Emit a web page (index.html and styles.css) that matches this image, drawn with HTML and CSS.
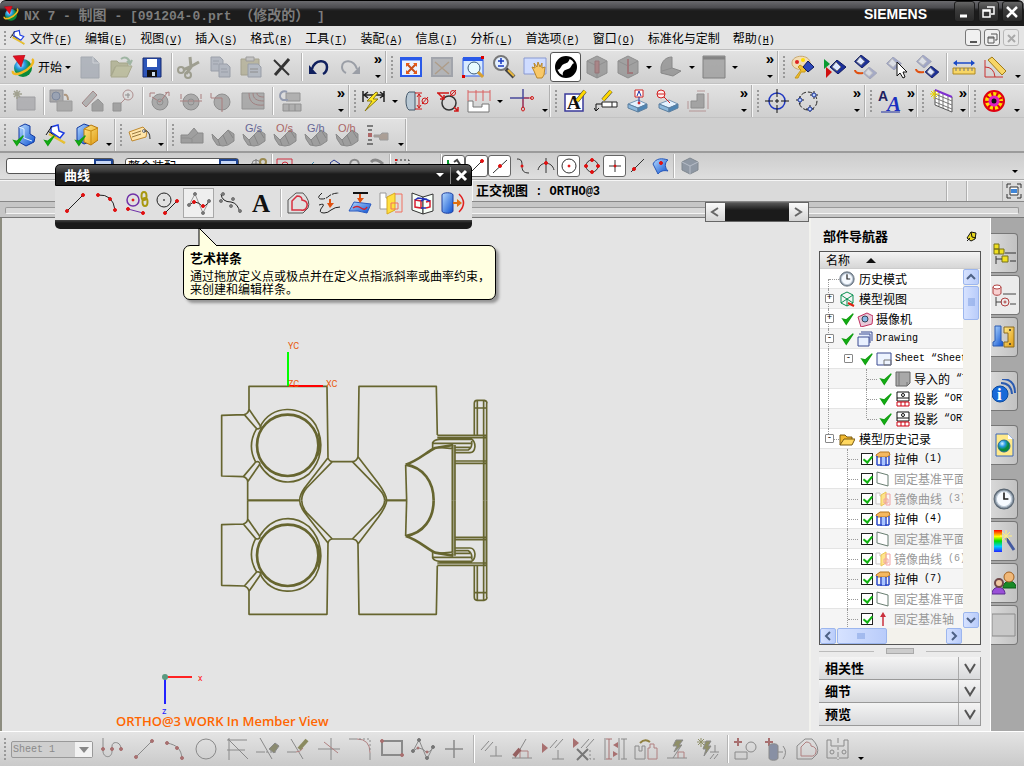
FILE: index.html
```
<!DOCTYPE html>
<html lang="zh-CN">
<head>
  <meta charset="UTF-8">
  <meta name="viewport" content="width=device-width, initial-scale=1">
  <title>NX 7 - 制图</title>
  <link rel="stylesheet" href="styles.css">
</head>
<body>
<svg class="defs" width="0" height="0">
  <defs>
    <linearGradient id="blue" x1="0" y1="0" x2="1" y2="1"><stop offset="0" stop-color="#b8dcff"/><stop offset="1" stop-color="#0a4fd0"/></linearGradient>
    <linearGradient id="gold" x1="0" y1="0" x2="1" y2="1"><stop offset="0" stop-color="#ffe98a"/><stop offset="1" stop-color="#e09a10"/></linearGradient>
    <radialGradient id="globe" cx=".35" cy=".3"><stop offset="0" stop-color="#d8f4ff"/><stop offset=".5" stop-color="#2a9be8"/><stop offset="1" stop-color="#0a8a3a"/></radialGradient>
    <linearGradient id="rainbow" x1="0" y1="0" x2="0" y2="1"><stop offset="0" stop-color="#f00"/><stop offset=".3" stop-color="#ff0"/><stop offset=".5" stop-color="#0d0"/><stop offset=".75" stop-color="#0cf"/><stop offset="1" stop-color="#22f"/></linearGradient>
  </defs>
  <symbol id="tick" viewBox="0 0 16 16"><path d="M2 8l4 6L14 2 6 9z" fill="#12b012" stroke="#12a012" stroke-width="1.5"/></symbol>
  <symbol id="nx" viewBox="0 0 24 24"><circle cx="12" cy="13" r="9" fill="url(#globe)" stroke="none"/><path d="M21 4c4 3-3 11-11 14-5 2-9 1-8-2" fill="none" stroke="#f0b820" stroke-width="2.5"/><path d="M2 1l12-1-4 12z" fill="#e01020" stroke="#a00010" stroke-width=".5"/></symbol>
  <symbol id="sketch" viewBox="0 0 24 24"><path d="M8 4l7-2 1 6 5 2-4 5-9-6z" fill="#fff" stroke="#1a3ae0" stroke-width="1.5"/><path d="M3 12l6-9M5 8l16 12" stroke="#111" fill="none"/><path d="M6 11l16 9" stroke="#e8c030" stroke-width="2.5"/></symbol>
  <symbol id="block" viewBox="0 0 24 24"><path d="M3 15l10-4 9 4-9 4z" fill="#e4f2ff" stroke="#7796b4"/><path d="M3 15v4l10 4v-4z" fill="#8cb8dc" stroke="#5d7f9f"/><path d="M22 15v4l-9 4v-4z" fill="#4d85b5" stroke="#5d7f9f"/></symbol>
  <symbol id="surf" viewBox="0 0 24 24"><path d="M1 11l6 6 5-5 5-5 6 4v7l-6 4-5 1-6-1-4-6z" fill="#8c8c8c" stroke="#707070"/><path d="M7 17l2 5M12 12l4 9M17 7l5 8" stroke="#6c6c6c" fill="none"/></symbol>
  <symbol id="dia" viewBox="0 0 16 14"><path d="M7 0l9 7-8 7L0 7z" fill="#1b2f9a" stroke="#101c60"/><path d="M6 2l5 5-4 4-5-4z" fill="#dfe8ff"/></symbol>
  <symbol id="extrude" viewBox="0 0 16 16"><path d="M1 4l4-3h9l1 3-3 2H2z" fill="#f4b860" stroke="#b87820"/><path d="M2 5v9M6 6v9M11 6v9M14 5v9M2 14h12" stroke="#2a4ac8" stroke-width="1.5" fill="none"/><path d="M7 6h3v8H7z" fill="#a8c4ff"/></symbol>
  <symbol id="plane" viewBox="0 0 16 16"><path d="M2 1l11 3v11L2 12z" fill="#fff" stroke="#456050"/></symbol>
  <symbol id="mirror" viewBox="0 0 16 16"><path d="M1 2h4v3h3v8H1z" fill="#fff" stroke="#bbb"/><path d="M6 4l5-3v11l-5 3z" fill="#ffe070" stroke="#e8b830"/><path d="M11 3h4v11h-4zM9 8h4v4H9z" fill="none" stroke="#f09090"/></symbol>
  <symbol id="ortho" viewBox="0 0 16 16"><path d="M2 1h12v9H2z" fill="#fff" stroke="#111"/><circle cx="8" cy="4" r="1.5" fill="none" stroke="#111"/><path d="M2 7h12" stroke="#111"/><path d="M2 11h12v4H2zM6 11v4M10 11v4" fill="#fff" stroke="#d00010"/></symbol>
  <symbol id="clock" viewBox="0 0 20 20"><circle cx="10" cy="10" r="9" fill="#8a97a5" stroke="#5a6672"/><circle cx="10" cy="10" r="7" fill="#f6faff" stroke="#c0ccd8"/><path d="M10 4v6h4" fill="none" stroke="#222" stroke-width="1.5"/></symbol>
</svg>

<div class="app">
  <header class="titlebar">
    <svg class="app-icon"><use href="#nx"/></svg>
    <h1><span class="la">NX 7 - </span>制图<span class="la"> - [091204-0.prt </span>（修改的）<span class="la"> ]</span></h1>
    <span class="brand">SIEMENS</span>
    <div class="win-buttons">
      <button aria-label="最小化"><svg><path d="M5 13h7" stroke-width="3"/></svg></button>
      <button aria-label="还原"><svg><path d="M8 4h7v7h-3M4 7h7v7H4zM4 8h7" stroke-width="1.5"/></svg></button>
      <button aria-label="关闭"><svg><path d="M4 4l10 10M14 4L4 14" stroke-width="2.5"/></svg></button>
    </div>
  </header>

  <nav class="menubar">
    <i class="grip"></i>
    <svg class="menu-icon"><use href="#sketch"/></svg>
    <button>文件<span class="la">(<u>F</u>)</span></button>
    <button>编辑<span class="la">(<u>E</u>)</span></button>
    <button>视图<span class="la">(<u>V</u>)</span></button>
    <button>插入<span class="la">(<u>S</u>)</span></button>
    <button>格式<span class="la">(<u>R</u>)</span></button>
    <button>工具<span class="la">(<u>T</u>)</span></button>
    <button>装配<span class="la">(<u>A</u>)</span></button>
    <button>信息<span class="la">(<u>I</u>)</span></button>
    <button>分析<span class="la">(<u>L</u>)</span></button>
    <button>首选项<span class="la">(<u>P</u>)</span></button>
    <button>窗口<span class="la">(<u>O</u>)</span></button>
    <button>标准化与定制</button>
    <button>帮助<span class="la">(<u>H</u>)</span></button>
    <div class="mdi-buttons">
      <button aria-label="最小化"><svg><path d="M4 11h7" stroke-width="2"/></svg></button>
      <button aria-label="还原"><svg><path d="M6 3h6v6h-2M3 6h6v6H3zM3 7h6"/></svg></button>
      <button aria-label="关闭" disabled><svg><path d="M4 4l7 7M11 4l-7 7" stroke-width="2"/></svg></button>
    </div>
  </nav>

  <div class="toolrow">
    <div class="bar std">
      <i class="grip"></i>
      <button class="start"><svg><use href="#nx"/></svg>开始<i class="arrow"></i></button>
      <button class="tb off" aria-label="新建"><svg><path d="M3 2h12l6 6v15H3z" fill="#a3a9b3" stroke="#9299a3"/><path d="M15 2v6h6" stroke="#ccd0d6"/></svg></button>
      <button class="tb off" aria-label="打开"><svg><path d="M2 6h6l2 2h9v4H6L2 21z" fill="#a9aa86" stroke="#92936f"/><path d="M7 11h16l-5 11H2z" fill="#b5b690" stroke="#9a9b76"/><path d="M12 4c4-3 8-1 9 4m-3-2l3 3 2-4" stroke="#8ba890" stroke-width="2"/></svg></button>
      <button class="tb" aria-label="保存"><svg><path d="M3 3h18v19H3z" fill="#2d55b8" stroke="#14286e"/><path d="M7 4h10v8H7z" fill="#fff" stroke="none"/><path d="M7 15h10v7H7z" fill="#111" stroke="none"/><path d="M12 17h3v4h-3z" fill="#cde" stroke="none"/></svg></button>
      <i class="sep"></i>
      <button class="tb off" aria-label="剪切"><svg><path d="M13 2l1 10-5 7M22 7l-9 5-7 3" stroke="#8b8b78" stroke-width="3"/><g stroke="#8b8b78" stroke-width="2"><circle cx="4" cy="15" r="3"/><circle cx="11" cy="20" r="3"/></g></svg></button>
      <button class="tb off" aria-label="复制"><svg><g fill="#a6acb8" stroke="#858c99"><path d="M3 2h9l3 3v11H3z"/><path d="M11 9h8l3 3v10H11z"/><path d="M5 6h6M5 9h5M13 14h6M13 17h7"/></g></svg></button>
      <button class="tb off" aria-label="粘贴"><svg><path d="M2 4h18v16H2z" fill="#aeaa8e" stroke="#938f76"/><path d="M7 2h8v4H7z" fill="#bbb" stroke="#888"/><path d="M9 9h10l3 3v10H9z" fill="#a9b0bb" stroke="#858c99"/><path d="M11 14h8M11 17h8"/></svg></button>
      <button class="tb" aria-label="删除"><svg><path d="M4 5l15 15" stroke="#333" stroke-width="2"/><path d="M19 4L5 20" stroke="#333" stroke-width="3"/></svg></button>
      <i class="sep"></i>
      <button class="tb" aria-label="撤消"><svg><path d="M5 14C8 4 20 4 20 12c0 4-2 6-4 7" stroke="#10205e" stroke-width="2.5"/><path d="M2 10v9h8z" fill="#10205e" stroke="none"/></svg></button>
      <button class="tb" aria-label="重做"><svg><path d="M19 14C16 4 4 4 4 12c0 3 2 5 4 6" stroke="#9a9ea6" stroke-width="2"/><path d="M22 11v8h-8z" fill="#9a9ea6" stroke="none"/></svg></button>
      <button class="more">»<i class="arrow"></i></button>
    </div>
    <div class="bar view">
      <i class="grip"></i>
      <button class="tb" aria-label="适合窗口"><svg><path d="M2 3h20v18H2z" fill="#eaf3ff" stroke="#2a5ae8" stroke-width="2"/><path d="M2 4h20" stroke="#2a5ae8" stroke-width="3"/><path d="M8 9l9 9M17 9l-9 9" stroke="#c8501c" stroke-width="2"/><path d="M7 8h4l-4 4zM18 8h-4l4 4zM7 19h4l-4-4zM18 19h-4l4-4z" fill="#e85a18" stroke="none"/></svg></button>
      <button class="tb off" aria-label="适合选择"><svg><path d="M2 3h20v18H2z" fill="#a7a9ad" stroke="#8f939c" stroke-width="2"/><path d="M5 7l14 12M19 7L5 19" stroke="#a08a70" stroke-width="1.5"/></svg></button>
      <button class="tb" aria-label="缩放窗口"><svg><path d="M2 3h20v18H2z" fill="#d8eaff" stroke="#2a5ae8"/><path d="M2 4h20" stroke="#2a5ae8" stroke-width="4"/><circle cx="13" cy="13" r="6" fill="#e8faff" stroke="#3a5a7a"/><path d="M17 17l5 5" stroke="#d8a030" stroke-width="3"/><path d="M1 20h3v3H1zM20 1h3v3h-3z" fill="#d00" stroke="none"/></svg></button>
      <button class="tb" aria-label="缩放"><svg><circle cx="9" cy="8" r="7" fill="#e4f0ff" stroke="#777" stroke-width="2"/><path d="M6 6h6M9 3v6M6 11h6" stroke="#1a3ac0" stroke-width="1.5"/><path d="M14 14l8 8" stroke="#444" stroke-width="4"/><path d="M16 15l6 6" stroke="#e8b840" stroke-width="2"/></svg></button>
      <button class="tb" aria-label="平移"><svg><path d="M1 3h22v16H1z" fill="#cfdcff" stroke="#8898d0"/><path d="M11 16l-2-4 3 1-1-5 3 4 1-5 2 5 2-4v5l3-1-1 8-2 3h-5z" fill="#f8c868" stroke="#b8862c"/></svg></button>
      <button class="tb on" aria-label="着色"><svg><circle cx="12" cy="12" r="10" fill="#fff" stroke="#000" stroke-width="2"/><path d="M12 2C6 2 1 7 2 14c2 2 4 0 5-2 2-4 5-3 7-5s1-4 4-4c-2-1-4-1-6-1z" fill="#000" stroke="none"/><path d="M21 8c-4 0-3 5-7 6s-6 3-5 7c8 3 14-4 12-13z" fill="#000" stroke="none"/></svg></button>
      <button class="tb off" aria-label="截面"><svg><path d="M12 1l10 5v12l-10 5-10-5V6z" fill="#8e8e8e" stroke="#777"/><path d="M2 6l10 5 10-5M12 11v12"/><path d="M10 6h4v12h-4z" fill="#9a6a6c" stroke="#805458"/></svg></button>
      <button class="tb off" aria-label="编辑截面"><svg><path d="M12 1l10 5v12l-10 5-10-5V6z" fill="#8e8e8e" stroke="#777"/><path d="M2 6l10 5 10-5"/><path d="M12 4v14h5" stroke="#8d5a5e" stroke-width="2"/></svg></button>
      <button class="dd" aria-label="更多"><i class="arrow"></i></button>
      <button class="tb off" aria-label="渲染样式"><svg><path d="M2 12c1-6 5-10 11-10v11l9 3-8 5-12-3z" fill="#8a8a8a" stroke="#6f6f6f"/><path d="M3 16l10-3"/></svg></button>
      <button class="dd" aria-label="更多"><i class="arrow"></i></button>
      <button class="tb off" aria-label="背景"><svg><path d="M1 1h22v22H1z" fill="#9a9a9a" stroke="#666"/><path d="M1 3h22" stroke="#666" stroke-width="3"/></svg></button>
      <button class="dd" aria-label="更多"><i class="arrow"></i></button>
      <button class="more">»<i class="arrow"></i></button>
    </div>
    <div class="bar last">
      <i class="grip"></i>
      <button class="tb" aria-label="编辑对象显示"><svg><path d="M1 8c0-9 18-9 18 0 0 4-5 1-5 5-1 3-13 2-13-5z" fill="#f2ddb5" stroke="#c8a870"/><circle cx="6" cy="7" r="2" fill="#d22" stroke="none"/><circle cx="12" cy="5" r="2" fill="#fd0" stroke="none"/><path d="M4 23l6-8-3-3 2-2 3 2 3 1-1 4-4 0-3 6z" fill="#f0c030" stroke="#c89818"/><path d="M17 6l6 6-6 5-5-5z" fill="#2c48b8" stroke="#101c60"/></svg></button>
      <button class="tb" aria-label="显示和隐藏"><svg><path d="M2 4l6 5-6 5z" fill="#0a9a30" stroke="none"/><path d="M4 12l6 5-6 6z" fill="#d01010" stroke="none"/><use href="#dia" x="8" y="5" width="16" height="14"/></svg></button>
      <button class="tb" aria-label="隐藏"><svg><use href="#dia" x="1" y="0" width="16" height="13"/><use href="#dia" x="10" y="12" width="14" height="12" opacity=".25"/><path d="M2 15q0 4 8 3" stroke="#e05010" stroke-width="2"/></svg></button>
      <button class="tb" aria-label="选择"><svg><use href="#dia" x="2" y="2" width="16" height="13" opacity=".3"/><path d="M13 7v14l3-3 3 5 2-1-2-5h4z" fill="#fff" stroke="#111"/></svg></button>
      <button class="tb" aria-label="显示"><svg><use href="#dia" x="1" y="0" width="16" height="13" opacity=".3"/><use href="#dia" x="10" y="11" width="14" height="12"/><path d="M1 14q0 4 8 3" stroke="#e05010" stroke-width="2"/></svg></button>
      <i class="sep"></i>
      <button class="tb" aria-label="测量距离"><svg><path d="M1 13h22v6H1z" fill="#f7d666" stroke="#b08a20"/><path d="M4 13v3M8 13v3M12 13v3M16 13v3M20 13v3"/><path d="M2 8h20" stroke="#1a4ac8" stroke-width="1.5"/><path d="M5 5L1 8l4 3zM19 5l4 3-4 3z" fill="#1a4ac8" stroke="none"/></svg></button>
      <button class="tb" aria-label="测量角度"><svg><path d="M2 5v17h18M2 12q9 0 10 10" stroke="#c83030"/><path d="M5 5l4-3 14 14-4 4z" fill="#f7d666" stroke="#a07a18"/></svg></button>
      <button class="more"><i class="arrow"></i></button>
    </div>
  </div>

  <div class="toolrow">
    <div class="bar drafting">
      <i class="grip"></i>
      <button class="tb" aria-label="新建图纸页"><svg><path d="M5 8h18v13H5z" fill="#a5a5a9" stroke="#8c8c90"/><path d="M5 1v9M1 5h9M2 2l6 6M8 2L2 8" stroke="#8f8f78" stroke-width="1.5"/></svg></button>
      <i class="sep"></i>
      <button class="tb" aria-label="视图创建"><svg><path d="M1 1h13v12H1z" fill="#98989a" stroke="#7b7b80"/><circle cx="7" cy="7" r="4" fill="#8490a6" stroke="#5e6c88"/><path d="M8 12h15v10H8z" fill="#9c9c9c" stroke="#888"/><path d="M15 6q4-1 4 5" stroke="#a08060" stroke-width="2"/></svg></button>
      <button class="tb" aria-label="投影视图"><svg><path d="M2 14L13 2l4 4L6 18z" fill="#a5a5a5" stroke="#906c6c"/><path d="M12 15l6-5 5 5v7H12z" fill="#8f8f8f" stroke="#808080"/></svg></button>
      <button class="tb" aria-label="局部放大图"><svg><circle cx="17" cy="6" r="5" stroke="#a07676"/><path d="M14 10l-5 5" stroke="#a07676"/><path d="M2 14h8v8H2z" fill="#929292" stroke="#7c7c7c"/><path d="M14 6h5M17 4v5"/></svg></button>
      <i class="sep"></i>
      <button class="tb" aria-label="剖视图"><svg><circle cx="12" cy="13" r="8" fill="#9b9b9b" stroke="#777"/><path d="M2 8V4h5M17 4l4-1v4M4 8l8 5 7-9" stroke="#9a6060"/><circle cx="12" cy="13" r="3"/></svg></button>
      <button class="tb" aria-label="半剖视图"><svg><circle cx="12" cy="13" r="8" fill="#9b9b9b" stroke="#777"/><path d="M2 10V5M22 10V5M1 12h22" stroke="#9a6060"/><circle cx="12" cy="13" r="3"/></svg></button>
      <button class="tb" aria-label="旋转剖视图"><svg><circle cx="12" cy="13" r="8" fill="#9b9b9b" stroke="#777"/><path d="M1 9V4M1 9h11v14" stroke="#9a6060"/></svg></button>
      <button class="tb" aria-label="局部剖视图"><svg><path d="M1 4h22v16H1z" fill="#9c9c9c" stroke="#7c7c7c"/><path d="M8 4c0 10 6 13 15 12M12 4c0 6 4 8 11 8M16 4c0 3 3 4 7 4" stroke="#8f6464"/></svg></button>
      <i class="sep"></i>
      <button class="tb" aria-label="更新视图"><svg><path d="M8 4h14v8H8zM5 15h18v7H5z" fill="#a2a2a2" stroke="#7c7c7c"/><path d="M9 3C3 0-1 8 5 11h5" stroke="#7c86a0" stroke-width="2"/><path d="M11 15v7M17 15v7"/></svg></button>
      <button class="more">»<i class="arrow"></i></button>
    </div>
    <div class="bar dims">
      <i class="grip"></i>
      <button class="tb" aria-label="自动判断尺寸"><svg><path d="M1 2v11M22 2v11M1 6h21M6 3L2 6l4 3M18 3l4 3-4 3" stroke="#222" stroke-width="1.5"/><path d="M14 3L5 12h5L3 22 16 10h-5l5-6z" fill="#ffe820" stroke="#8a7a10"/></svg></button>
      <button class="dd" aria-label="更多"><i class="arrow"></i></button>
      <button class="tb" aria-label="圆柱尺寸"><svg><path d="M4 3h6v18H4c-4-2-4-16 0-18z" fill="#b8c8d4" stroke="#44586a"/><path d="M10 4h7M10 20h7M14 5v14M12 8l2-3 2 3M12 16l2 3 2-3" stroke="#d01818"/><ellipse cx="20" cy="12" rx="3" ry="3" stroke="#d01818"/><path d="M17 15l6-7" stroke="#d01818"/></svg></button>
      <button class="tb" aria-label="直径尺寸"><svg><circle cx="13" cy="14" r="7" stroke="#333" stroke-width="1.5"/><path d="M1 4h12M2 4l6 6M18 18l4 4M8 6v4H4M22 18v4h-4" stroke="#d01818" stroke-width="1.5"/><circle cx="17" cy="4" r="2.5" stroke="#d01818"/><path d="M14 7l6-6" stroke="#d01818"/></svg></button>
      <button class="tb" aria-label="水平链"><svg><path d="M1 23V12h5v6h9v-3h7v8z" fill="#fff" stroke="#777"/><path d="M1 1v11M9 1v11M16 1v11M23 1v11M1 3h22" stroke="#d86060"/></svg></button>
      <button class="dd" aria-label="更多"><i class="arrow"></i></button>
      <button class="tb" aria-label="坐标尺寸"><svg><path d="M13 0v19M0 9h19" stroke="#4a4a9a" stroke-width="1.5"/><path d="M14 9h8M13 10v8" stroke="#e04040"/><circle cx="22" cy="9" r="1.5" stroke="#d01818"/><ellipse cx="13" cy="20" rx="1.5" ry="2" stroke="#d01818"/></svg></button>
      <button class="more"><i class="arrow"></i></button>
    </div>
    <div class="bar notes">
      <i class="grip"></i>
      <button class="tb" aria-label="注释"><svg><path d="M2 5h18v17H2z" fill="#fff" stroke="#3a3a9a" stroke-width="1.5"/><text x="4" y="20" class="glyph">A</text><path d="M14 12l8-10" stroke="#333" stroke-width="4"/><path d="M14 12l8-10" stroke="#ffd800" stroke-width="3"/></svg></button>
      <button class="tb" aria-label="特征控制框"><svg><path d="M8 13h15v5H8zM18 13v5" fill="#fff" stroke="#222"/><path d="M8 15H2v7M0 19l2 3 3-3" stroke="#111"/><path d="M9 11l8-9" stroke="#333" stroke-width="4"/><path d="M9 11l8-9" stroke="#ffd800" stroke-width="3"/></svg></button>
      <button class="tb" aria-label="基准特征符号"><svg><use href="#block" width="24" height="24"/><path d="M10 1h8v7h-8z" fill="#fff" stroke="#d02020"/><path d="M12 7l2-5 2 5M14 8v6" stroke="#2030a0"/><circle cx="14" cy="14" r="1" fill="#d02020" stroke="#d02020"/></svg></button>
      <button class="tb" aria-label="基准目标"><svg><use href="#block" width="24" height="24"/><circle cx="5" cy="5" r="4" fill="#ffecec" stroke="#d02020"/><path d="M1 5h8M8 8l6 6" stroke="#d02020"/></svg></button>
      <button class="tb off" aria-label="定制符号"><svg><path d="M4 19v-7h6V5h7v14z" fill="#929292" stroke="#777"/><path d="M2 22h17M10 2h8M21 4v16M1 12v8" stroke="#aa8080"/></svg></button>
      <button class="more">»<i class="arrow"></i></button>
    </div>
    <div class="bar center">
      <i class="grip"></i>
      <button class="tb" aria-label="中心标记"><svg><circle cx="12" cy="12" r="8" stroke="#2038c0" stroke-width="1.5"/><path d="M12 0v8M12 10v4M12 16v8M0 12h8M10 12h4M16 12h8" stroke="#111"/></svg></button>
      <button class="tb" aria-label="螺栓圆"><svg><circle cx="12" cy="12" r="9" stroke="#222" stroke-dasharray="5 2"/><path d="M18 2v8M14 6h8M4 7v8M0 11h8M14 16v7M10 20h8" stroke="#222"/><g fill="#bcd4ff" stroke="#2038a0"><circle cx="18" cy="6" r="2"/><circle cx="4" cy="11" r="2"/><circle cx="14" cy="20" r="2"/></g></svg></button>
      <button class="more">»<i class="arrow"></i></button>
    </div>
    <div class="bar small">
      <i class="grip"></i>
      <button class="tb" aria-label="样式"><svg><text x="0" y="12" class="glyph-s">A</text><text x="9" y="22" class="glyph-i">A</text><path d="M3 23h19" stroke="#2030a0"/></svg></button>
      <button class="more">»<i class="arrow"></i></button>
    </div>
    <div class="bar small">
      <i class="grip"></i>
      <button class="tb" aria-label="表格注释"><svg><path d="M5 1l17 7v15L5 16z" fill="#fff" stroke="#555"/><path d="M5 5l17 7M5 9l17 7M5 13l17 7M9 3v14M13 5v14M18 7v14"/><path d="M5 1l17 7" stroke="#8030d0" stroke-width="2"/><path d="M4 1v9M0 5h9M1 2l6 6M7 2L1 8" stroke="#e8d000"/></svg></button>
      <button class="more">»<i class="arrow"></i></button>
    </div>
    <div class="bar last">
      <i class="grip"></i>
      <button class="tb" aria-label="标准件"><svg><circle cx="12" cy="12" r="10" fill="#ffe000" stroke="#e00010" stroke-width="2"/><circle cx="12" cy="12" r="7" stroke="#e00010" stroke-width="4" stroke-dasharray="2 3"/><circle cx="12" cy="12" r="4" fill="#111" stroke="#e020c0" stroke-width="3"/></svg></button>
      <button class="more"><i class="arrow"></i></button>
    </div>
  </div>

  <div class="toolrow bottom-row">
    <div class="bar apps">
      <i class="grip"></i>
      <button class="tb" aria-label="建模"><svg><path d="M7 4l6-3 5 2v8l5 3-1 5-8 4-7-4z" fill="url(#blue)" stroke="#1038a0"/><path d="M7 4l5 2v9l8 3" stroke="#e0f0ff"/><use href="#tick" x="0" y="11" width="13" height="13"/></svg></button>
      <button class="tb" aria-label="草图"><svg><use href="#sketch" width="24" height="24"/><use href="#tick" x="0" y="11" width="13" height="13"/></svg></button>
      <button class="tb" aria-label="装配"><svg><path d="M3 5l7-4 6 2v16l-6 2-7-4z" fill="url(#blue)" stroke="#1038a0"/><path d="M10 6l7-4 7 3v12l-7 5-7-3z" fill="url(#gold)" stroke="#b87810"/><path d="M10 6l7 2v14M17 8l7-3" stroke="#c88a10"/><use href="#tick" x="0" y="11" width="13" height="13"/></svg></button>
      <button class="more"><i class="arrow"></i></button>
    </div>
    <div class="bar small">
      <i class="grip"></i>
      <button class="tb" aria-label="标签"><svg><path d="M1 9l14-5 4 4-1 6-14 4z" fill="#ffe4a8" stroke="#c08a30"/><path d="M4 11l9-3M4 14l9-3" stroke="#987a40"/><circle cx="16" cy="8" r="1.5" fill="#fff"/><path d="M16 8q6-1 6 8" stroke="#333"/></svg></button>
      <button class="more"><i class="arrow"></i></button>
    </div>
    <div class="bar analysis">
      <i class="grip"></i>
      <button class="tb" aria-label="截面分析"><svg><path d="M1 12h7l6-7 4 5h5v10H1z" fill="#8c8c8c" stroke="#707070"/><path d="M1 15h8l2 1 7-6M12 16v4"/></svg></button>
      <button class="tb" aria-label="曲面分析"><svg><use href="#surf" width="24" height="24"/></svg></button>
      <button class="tb" aria-label="G/s"><svg><use href="#surf" width="24" height="24"/><text x="3" y="9" class="tag">G/s</text></svg></button>
      <button class="tb" aria-label="O/s"><svg><use href="#surf" width="24" height="24"/><text x="3" y="9" class="tag red">O/s</text></svg></button>
      <button class="tb" aria-label="G/h"><svg><use href="#surf" width="24" height="24"/><text x="3" y="9" class="tag">G/h</text></svg></button>
      <button class="tb" aria-label="O/h"><svg><use href="#surf" width="24" height="24"/><text x="3" y="9" class="tag red">O/h</text></svg></button>
      <button class="tb" aria-label="列表"><svg><path d="M1 3h6M2 7h4M2 17h4M1 21h6" stroke="#333" stroke-width="1.5"/><path d="M2 10h4v4H2z" fill="#a04040" stroke="none"/><path d="M8 12h6l2-2h6v7h-8l-1-3H8z" fill="#9c8c80" stroke="#888"/></svg></button>
      <button class="more"><i class="arrow"></i></button>
    </div>
  </div>

  <div class="selbar">
    <div class="combo"><select aria-label="类型过滤器"><option></option></select></div>
    <div class="combo wide"><select aria-label="选择范围"><option>整个装配</option></select></div>
    <div class="selmid">
      <button class="sb" aria-label="链接"><svg><circle cx="6" cy="7" r="4" stroke="#888"/><path d="M6 2v10M1 7h10" stroke="#777"/><circle cx="13" cy="5" r="3" stroke="#9a8a50" stroke-width="2"/></svg></button>
      <i class="sep"></i>
      <button class="sb" aria-label="框选"><svg><path d="M1 2h15v14H1z" stroke="#d03040"/><circle cx="9" cy="8" r="3" stroke="#d03040"/></svg></button>
      <button class="sb" aria-label="选择点"><svg><path d="M12 8l3-3" stroke="#48a"/></svg></button>
      <button class="sb" aria-label="选择体"><svg><path d="M8 6l4-3 6 4-6 4z" stroke="#2a3a90"/></svg></button>
      <button class="sb" aria-label="旋转"><svg><path d="M5 8c0-7 9-7 9 0" stroke="#888" stroke-width="2"/></svg></button>
      <button class="sb" aria-label="反向"><svg><path d="M3 5c4-4 9-1 12 2" stroke="#888" stroke-width="3"/></svg></button>
      <i class="sep"></i>
      <button class="sb" aria-label="矩形"><svg><path d="M2 3h13v11H2z" stroke="#333" stroke-dasharray="2 2"/><path d="M1 2h2v2H1z" fill="#e01010"/></svg></button>
    </div>
    <i class="sep"></i>
    <button class="sb on" aria-label="捕捉点"><svg><path d="M3 3v4l4 2" stroke="#0a9a30" stroke-width="2"/><path d="M9 5l3-2 4 6" stroke="#444" stroke-width="2"/></svg></button>
    <button class="sb on" aria-label="端点"><svg><path d="M2 16L14 4" stroke="#333"/><circle cx="14" cy="4" r="1.5" fill="#e01010" stroke="#e01010"/></svg></button>
    <button class="sb on" aria-label="中点"><svg><path d="M2 16L16 3" stroke="#333"/><circle cx="9" cy="9" r="1.5" fill="#e01010" stroke="#e01010"/></svg></button>
    <button class="sb" aria-label="控制点"><svg><path d="M3 2c5 0 5 3 5 7s1 7 7 7" stroke="#333"/><circle cx="8" cy="9" r="1.5" fill="#e01010" stroke="none"/></svg></button>
    <button class="sb" aria-label="交点"><svg><path d="M9 1v15M1 13c2-9 14-9 16 0" stroke="#333"/><circle cx="9" cy="6" r="1.5" fill="#e01010" stroke="#e01010"/></svg></button>
    <button class="sb on" aria-label="圆心"><svg><circle cx="9" cy="9" r="7" stroke="#333"/><circle cx="9" cy="9" r="1" fill="#e01010" stroke="#e01010"/></svg></button>
    <button class="sb" aria-label="象限点"><svg><circle cx="9" cy="9" r="6" stroke="#333"/><g fill="#e01010" stroke="#e01010"><circle cx="9" cy="3" r="1.5"/><circle cx="9" cy="15" r="1.5"/><circle cx="3" cy="9" r="1.5"/><circle cx="15" cy="9" r="1.5"/></g></svg></button>
    <button class="sb on" aria-label="现有点"><svg><path d="M9 3v12M3 9h12" stroke="#333"/><circle cx="9" cy="9" r="1" fill="#e01010" stroke="#e01010"/></svg></button>
    <button class="sb" aria-label="曲线上的点"><svg><path d="M2 15L15 2" stroke="#333"/><circle cx="5" cy="12" r="1.5" fill="#e01010" stroke="#e01010"/></svg></button>
    <button class="sb" aria-label="面上的点"><svg><path d="M1 7c3-6 9-6 15-4-4 3-3 8 0 11-4-1-8 0-10 3z" fill="url(#blue)" stroke="#2858b8"/><circle cx="9" cy="6" r="1.5" fill="#e01010" stroke="#e01010"/></svg></button>
    <i class="sep"></i>
    <button class="sb solid" aria-label="实体"><svg><path d="M9 1l8 4v8l-8 4-8-4V5z" fill="#8f98a4" stroke="#808890"/><path d="M1 5l8 4 8-4M9 9v8" stroke="#b8bec8"/></svg></button>
    <i class="arrow end"></i>
  </div>

  <div class="cuebar">
    <div class="cue"></div>
    <div class="status">正交视图<span class="la"> : ORTHO@3</span></div>
    <div class="cell"></div>
    <div class="cell big"></div>
    <button class="full" aria-label="全屏"><svg><path d="M1 5V1h4M11 1h4v4M15 11v4h-4M5 15H1v-4" stroke="#333"/><path d="M4 4h8v8H4z" fill="#fff" stroke="#333"/><path d="M5 6h6v4H5z" fill="#3f86d8" stroke="none"/></svg></button>
  </div>
  <div class="groove"></div>

  <main class="workspace">
    <section class="viewport">
      <svg class="scene">
        <g transform="translate(-2 -218)">
          <g transform="translate(205 330) scale(.3333)" class="part">
            <g id="half">
              <path d="M128 511V455M132 238V169H366L369 383M118 254L50 256V438L115 440M118 254Q130 250 132 238M118 254L155 296M132 238L168 290M155 296Q166 298 168 290M115 440Q128 445 128 455M115 440L152 396M128 455L165 402M152 396Q162 392 165 402M155 296Q125 346 152 396"/>
              <path d="M165 292C195 222 295 222 332 285C360 340 348 395 312 432C265 470 200 465 163 402"/>
              <circle cx="248" cy="346" r="92" class="thick"/>
              <path d="M340 310Q350 346 338 378"/>
              <path d="M128 511H285M541 511H605M369 383Q372 394 382 395H442Q456 394 459 380M382 395L305 474Q290 492 290 511M369 383L298 475Q284 495 284 511M442 395L523 478Q539 495 539 511M459 380L520 460Q545 495 545 511M459 380L462 169H694L697 315"/>
              <path d="M605 511L602 404"/>
              <path d="M602 404C655 412 686 455 686 511M602 404C640 392 665 366 690 354L745 345" class="thick"/>
              <path d="M683 358V338Q688 328 705 328H800Q810 334 810 350Q808 368 795 368H750M697 316H845M697 323H845M685 340H800M750 360H790Q803 353 800 333M700 352L745 356M750 352H795M742 345V511M750 345V511M836 212V511M845 220V511M750 393H845M750 400H845M808 315V220Q808 211 816 211H838Q846 213 846 220M817 212V315M808 234H845"/>
              <path d="M840 316V511M746 345V511" opacity=".5"/>
            </g>
            <use href="#half" transform="translate(0 1022) scale(1 -1)"/>
          </g>
          <path d="M288 352v34" stroke="#0f0" stroke-width="2"/>
          <path d="M289 386h34" stroke="#f00" stroke-width="2"/>
          <text x="288" y="349" class="axis">YC</text>
          <text x="288" y="387" class="axis">ZC</text>
          <text x="326" y="387" class="axis">XC</text>
          <path d="M165 678v26" stroke="#22f" stroke-width="2"/>
          <path d="M165 677h27" stroke="#f22" stroke-width="2"/>
          <circle cx="165" cy="677" r="3" fill="#5a9a80"/>
          <text x="198" y="681" class="axis x">x</text>
          <text x="162" y="714" class="axis z">z</text>
          <text x="116" y="726" class="workview">ORTHO@3 WORK In Member View</text>
        </g>
      </svg>
    </section>

    <aside class="navigator">
      <div class="nav-title"><h2>部件导航器</h2><svg><path d="M2 9l4-6 5 1-1 6-4 2z" fill="#e8d820" stroke="#111"/><path d="M6 3l1 5 4 1M2 12l3-3" stroke="#111"/></svg></div>
      <div class="tree">
        <div class="tree-head">名称<i></i></div>
        <div class="tree-body">
          <ul>
            <li><i class="g ell"></i><i class="ic"><svg><use href="#clock"/></svg></i>历史模式</li>
            <li><i class="g v"><button aria-label="展开">+</button></i><i class="ic"><svg><path d="M2 4l6-3 6 3v8l-6 3-6-3zM2 4l6 4 6-4M8 8v7M2 12l6-4 6 4" stroke="#0a9050"/><path d="M9 12l6 3" stroke="#e02010" stroke-width="2"/></svg></i>模型视图</li>
            <li><i class="g v"><button aria-label="展开">+</button></i><i class="ic ck"><svg><use href="#tick"/></svg></i><svg><path d="M1 6l9-4 6 3-1 8-11 3z" fill="#e8c8d8" stroke="#c03060"/><circle cx="8" cy="8" r="3" fill="#88b8e8" stroke="#345"/></svg>摄像机</li>
            <li><i class="g v"><button aria-label="折叠">-</button></i><i class="ic ck"><svg><use href="#tick"/></svg></i><svg><path d="M4 1h11v9M2 3h11v9M1 6h11v9H1z" fill="#e8f0ff" stroke="#3a4a90"/><path d="M7 11h5v4H7z"/></svg><span class="la">Drawing</span></li>
            <li><i class="g v"></i><i class="g e"><button aria-label="折叠">-</button></i><i class="ic ck"><svg><use href="#tick"/></svg></i><svg><path d="M1 2h14v12H1z" fill="#eef4ff" stroke="#3a4a90"/><path d="M8 9h7v5H8z" stroke="#777"/></svg><span class="la">Sheet “Sheet 1”</span></li>
            <li><i class="g v"></i><i class="g"></i><i class="g t"></i><i class="ic ck"><svg><use href="#tick"/></svg></i><svg><path d="M1 1h14v11l-3 3H1z" fill="#a9a9a9" stroke="#666"/><path d="M12 11v4M4 1v14" stroke="#777"/></svg>导入的<span class="la"> “TOP”</span></li>
            <li><i class="g v"></i><i class="g"></i><i class="g t"></i><i class="ic ck"><svg><use href="#tick"/></svg></i><svg><use href="#ortho"/></svg>投影<span class="la"> “ORTHO@2”</span></li>
            <li><i class="g v"></i><i class="g"></i><i class="g l"></i><i class="ic ck"><svg><use href="#tick"/></svg></i><svg><use href="#ortho"/></svg>投影<span class="la"> “ORTHO@3”</span></li>
            <li><i class="g l"><button aria-label="折叠">-</button></i><i class="ic"><svg><path d="M1 14V4h5l2 2h5v3" fill="#f0b830" stroke="#7a5a10"/><path d="M1 14l4-6h11l-3 6z" fill="#ffd860" stroke="#7a5a10"/></svg></i>模型历史记录</li>
            <li><i class="g"></i><i class="g t"></i><input type="checkbox" checked aria-label="拉伸 (1)"><svg><use href="#extrude"/></svg>拉伸<span class="la"> (1)</span></li>
            <li class="dim"><i class="g"></i><i class="g t"></i><input type="checkbox" checked aria-label="固定基准平面 (2)"><svg><use href="#plane"/></svg>固定基准平面</li>
            <li class="dim"><i class="g"></i><i class="g t"></i><input type="checkbox" checked aria-label="镜像曲线 (3)"><svg><use href="#mirror"/></svg>镜像曲线<span class="la"> (3)</span></li>
            <li><i class="g"></i><i class="g t"></i><input type="checkbox" checked aria-label="拉伸 (4)"><svg><use href="#extrude"/></svg>拉伸<span class="la"> (4)</span></li>
            <li class="dim"><i class="g"></i><i class="g t"></i><input type="checkbox" checked aria-label="固定基准平面 (5)"><svg><use href="#plane"/></svg>固定基准平面</li>
            <li class="dim"><i class="g"></i><i class="g t"></i><input type="checkbox" checked aria-label="镜像曲线 (6)"><svg><use href="#mirror"/></svg>镜像曲线<span class="la"> (6)</span></li>
            <li><i class="g"></i><i class="g t"></i><input type="checkbox" checked aria-label="拉伸 (7)"><svg><use href="#extrude"/></svg>拉伸<span class="la"> (7)</span></li>
            <li class="dim"><i class="g"></i><i class="g t"></i><input type="checkbox" checked aria-label="固定基准平面 (8)"><svg><use href="#plane"/></svg>固定基准平面</li>
            <li class="dim"><i class="g"></i><i class="g t"></i><input type="checkbox" checked aria-label="固定基准轴"><svg><path d="M8 15V5" stroke="#c00010" stroke-width="1.5"/><path d="M8 1l3 5H5z" fill="#c00010" stroke="none"/></svg>固定基准轴</li>
          </ul>
          <div class="vscroll">
            <button aria-label="向上"><svg><path d="M4 10l4-4 4 4"/></svg></button>
            <div class="thumb"><svg><path d="M5 4h7M5 6h7M5 8h7M5 10h7" stroke="#7f9ee0" stroke-width="1"/></svg></div>
            <button class="down" aria-label="向下"><svg><path d="M4 6l4 4 4-4"/></svg></button>
          </div>
        </div>
        <div class="hscroll">
          <button aria-label="向左"><svg><path d="M10 4L6 8l4 4"/></svg></button>
          <div class="thumb"><svg><path d="M4 5v6M6 5v6M8 5v6M10 5v6" stroke="#7f9ee0" stroke-width="1"/></svg></div>
          <button class="right" aria-label="向右"><svg><path d="M6 4l4 4-4 4"/></svg></button>
        </div>
      </div>
      <div class="splitter"><i></i></div>
      <button class="fold"><span>相关性</span><svg><path d="M6 7l5 8 5-8"/></svg></button>
      <button class="fold"><span>细节</span><svg><path d="M6 7l5 8 5-8"/></svg></button>
      <button class="fold"><span>预览</span><svg><path d="M6 7l5 8 5-8"/></svg></button>
    </aside>

    <nav class="tabs">
      <button aria-label="装配导航器"><svg><path d="M2 8h5v5H2zM7 8h5v5H7zM2 3h5v5H2zM10 15h6v6h-6z" fill="#f0e020" stroke="#77701a"/><path d="M13 12h11M4 15v8M4 18h6M18 20h6" stroke="#333"/></svg></button>
      <button class="active" aria-label="部件导航器"><svg><path d="M1 4v6c0 3 8 3 8 0V4" fill="#f8d0d0" stroke="#b04040"/><ellipse cx="5" cy="4" rx="4" ry="2" fill="#fff" stroke="#b04040"/><path d="M11 11h13M4 14v9M4 19h6M18 21h6" stroke="#444"/><circle cx="13" cy="19" r="4" stroke="#b04040"/><circle cx="13" cy="19" r="1" stroke="#b04040"/></svg></button>
      <button aria-label="重用库"><svg><path d="M3 1h6v15l2 1v4H1v-4l2-1z" fill="url(#blue)" stroke="#2a5ab0"/><path d="M12 2h10v20H12v-5h4V8h-4z" fill="url(#gold)" stroke="#8a6a20"/><circle cx="18" cy="5" r="1" fill="#333"/><circle cx="18" cy="19" r="1" fill="#333"/></svg></button>
      <button class="gap" aria-label="HD3D 工具"><svg><circle cx="8" cy="15" r="8" fill="#1a6ad8" stroke="#0a4aa0"/><text x="5" y="21" class="info">i</text><path d="M9 4q10 0 11 11M10 0q13 0 13 14" stroke="#2a5ab0" stroke-width="2"/></svg></button>
      <button class="gap" aria-label="Web 浏览器"><svg><path d="M4 1h12l5 5v17H4z" fill="#ffe98a" stroke="#3a66b8"/><path d="M16 1v5h5" fill="#fff"/><circle cx="12" cy="13" r="6" fill="url(#globe)" stroke="#2a6a90"/></svg></button>
      <button class="gap" aria-label="历史记录"><svg><use href="#clock" x="1" y="1" width="22" height="22"/></svg></button>
      <button aria-label="系统材料"><svg><path d="M2 1h8v22H2z" fill="url(#rainbow)" stroke="none"/><path d="M14 9l8 12" stroke="#445aa0" stroke-width="3"/><path d="M14 1v12M8 7h12M10 3l8 8M18 3l-8 8" stroke="#fff080"/></svg></button>
      <button aria-label="角色"><svg><path d="M11 17c0-9 13-9 13 0z" fill="#188a28" stroke="#0a5a18"/><circle cx="17" cy="6" r="5" fill="#f0b878" stroke="#a06020"/><path d="M0 23c0-9 13-9 13 0z" fill="#9a50d8" stroke="#5a2a90"/><circle cx="7" cy="12" r="4" fill="#f0c8a0" stroke="#704848" stroke-width="2"/></svg></button>
      <button aria-label="空白"><svg><path d="M0 1h23v22H0z" fill="#c8c8c8" stroke="#8a8a8a"/></svg></button>
    </nav>
  </main>

  <footer class="sketchbar">
    <i class="grip"></i>
    <div class="sheet"><select disabled aria-label="图纸页"><option>Sheet 1</option></select></div>
    <button class="tb" aria-label="轮廓"><svg><path d="M2 1v13c0 7 9 8 9 0V9c0-5 9-5 9 3"/><g class="dots"><circle cx="2" cy="12" r="1.5"/><circle cx="11" cy="12" r="1.5"/><circle cx="20" cy="12" r="1.5"/></g></svg></button>
    <button class="tb" aria-label="直线"><svg><path d="M4 20L20 4"/><g class="dots"><circle cx="4" cy="20" r="1.5"/><circle cx="20" cy="4" r="1.5"/></g></svg></button>
    <button class="tb" aria-label="圆弧"><svg><path d="M4 6c10 2 14 6 15 15"/><g class="dots"><circle cx="4" cy="6" r="1.5"/><circle cx="14" cy="11" r="1.5"/><circle cx="19" cy="21" r="1.5"/></g></svg></button>
    <button class="tb" aria-label="圆"><svg><circle cx="12" cy="12" r="10"/></svg></button>
    <button class="tb" aria-label="派生直线"><svg><path d="M4 1v22M2 3h20M2 13h18M3 2l20 20"/></svg></button>
    <button class="tb" aria-label="快速修剪"><svg><path d="M4 1l12 21M0 15h9"/><path d="M10 15h12" stroke-dasharray="2 2"/><path d="M13 12l6-6 4 3-5 7z" fill="#8b8b70"/></svg></button>
    <button class="tb" aria-label="快速延伸"><svg><path d="M4 2l12 20M0 15h9"/><path d="M9 15q5 0 7-4" stroke="#b08080"/><path d="M12 12l8-9" stroke="#8b8b60" stroke-width="4"/></svg></button>
    <button class="tb" aria-label="制作拐角"><svg><path d="M0 12h22M13 1v22"/><path d="M6 5l14 11" stroke="#b08080"/></svg></button>
    <button class="tb" aria-label="圆角"><svg><path d="M0 2h8M21 16v7"/><path d="M8 2q13 0 13 14" stroke="#b08080"/><path d="M10 2h11v11" stroke-dasharray="2 2"/></svg></button>
    <button class="tb" aria-label="矩形"><svg><path d="M2 4h20v14H2z" stroke-width="2"/><g class="dots"><circle cx="2" cy="4" r="1.5"/><circle cx="22" cy="18" r="1.5"/></g></svg></button>
    <button class="tb" aria-label="艺术样条"><svg><path d="M2 14L8 3l8 19 6-12"/><path d="M2 14q7-6 13 1 4 1 7-5"/><g class="nodes"><circle cx="2" cy="14" r="1.5"/><circle cx="8" cy="3" r="1.5"/><circle cx="16" cy="21" r="1.5"/><circle cx="22" cy="10" r="1.5"/></g><g class="dots"><circle cx="7" cy="11" r="1"/><circle cx="16" cy="15" r="1"/></g></svg></button>
    <button class="tb" aria-label="点"><svg><path d="M12 3v18M3 12h18" stroke-width="1.5"/></svg></button>
    <i class="sep"></i>
    <button class="tb" aria-label="约束"><svg><path d="M2 13l8-9M6 14l8-9M11 19h12M17 9v10"/></svg></button>
    <button class="tb" aria-label="自动约束"><svg><path d="M2 21h20M5 21L16 2"/><path d="M10 21v-7h8v7" stroke="#b08080"/><path d="M4 19l6-7" stroke="#956060" stroke-width="4"/></svg></button>
    <button class="tb" aria-label="显示约束"><svg><path d="M1 6l6 5-6 5z" fill="#a87070" stroke="none"/><path d="M9 11l7-8M14 11l8-9M11 22h12M17 13v9"/></svg></button>
    <button class="tb" aria-label="不显示约束"><svg><path d="M1 1l6 5-6 5z" fill="#a87070" stroke="none"/><path d="M9 11l8-9M14 11l8-9"/><path d="M5 12l11 11M16 12L5 23" stroke="#777" stroke-width="2"/><path d="M18 13v9h5" stroke-dasharray="2 2"/></svg></button>
    <button class="tb" aria-label="动画尺寸"><svg><path d="M2 1v22M21 2v20M18 2h6M18 22h6M16 1v22"/><path d="M6 2v20M3 2h6M3 22h6" stroke="#a87070"/><path d="M15 5l-5 3 5 3zM10 14l5 3-5 3z" fill="#a87070" stroke="none"/></svg></button>
    <button class="tb" aria-label="转换"><svg><path d="M1 9h4v5h3V9h3v13H1z"/><path d="M14 22V11h2V7h4v4h3v11z" stroke="#b08080"/><path d="M6 6q5-5 10-1" stroke="#908040" stroke-width="2"/></svg></button>
    <button class="tb" aria-label="备选解"><svg><path d="M2 21h20M8 21l8-12"/><path d="M13 21v-6h6v6" stroke="#b08080"/><path d="M11 3h7l-4 5h3l-8 7 3-6H8z" fill="#8f8f68"/></svg></button>
    <button class="tb" aria-label="自动判断"><svg><path d="M5 1v9M1 5h9M2 2l6 6M8 2L2 8" stroke="#8f8f68"/><path d="M10 4h5l-3 5h3l-7 10 2-7H7z" fill="#8f8f68"/><path d="M14 15h9M19 8v7M14 22l4-5M18 22l4-5"/></svg></button>
    <i class="sep"></i>
    <button class="tb" aria-label="添加对象"><svg><path d="M5 1v8M1 5h8" stroke="#a87070" stroke-width="2"/><circle cx="18" cy="10" r="5"/><path d="M2 15h12v7H2z"/></svg></button>
    <button class="tb" aria-label="投影到"><svg><path d="M5 1v8M1 5h8" stroke="#a87070" stroke-width="2"/><path d="M5 9c0-3 9-3 9 0v12c0 3-9 3-9 0z" fill="#8890a4"/><path d="M14 15h5M19 9q5 6 0 13"/></svg></button>
    <button class="tb" aria-label="偏置曲线"><svg><path d="M2 9l8-7h7q8 8 5 15l-5 5H2z"/><path d="M6 10l5-5q5 0 5 4 6 1 5 6t-6 4H6z" stroke="#b08080"/></svg></button>
    <button class="tb" aria-label="镜像曲线"><svg><path d="M12 1v22" stroke-dasharray="5 2"/><path d="M11 21H1V3h4v6h6"/><circle cx="6" cy="15" r="2"/><path d="M13 21h9V3h-4v6h-5"/><circle cx="18" cy="15" r="2"/></svg></button>
    <button class="more"><i class="arrow"></i></button>
  </footer>

  <div class="pager">
    <button aria-label="向左"><svg><path d="M12 5L6 9l6 4"/></svg></button>
    <div class="pager-mid"></div>
    <button aria-label="向右"><svg><path d="M6 5l6 4-6 4"/></svg></button>
  </div>

  <section class="palette">
    <div class="palette-head"><h2>曲线</h2><i class="arrow"></i><button aria-label="关闭"><svg><path d="M4 4l9 9M13 4l-9 9"/></svg></button></div>
    <div class="palette-body">
      <button class="tb" aria-label="直线"><svg><path d="M4 20L20 4"/><g class="dots"><circle cx="4" cy="20" r="1.5"/><circle cx="20" cy="4" r="1.5"/></g></svg></button>
      <button class="tb" aria-label="圆弧"><svg><path d="M4 4q15-1 17 15"/><g class="dots"><circle cx="4" cy="4" r="1.5"/><circle cx="16" cy="8" r="1.5"/><circle cx="21" cy="19" r="1.5"/></g></svg></button>
      <button class="tb" aria-label="直线和圆弧"><svg><circle cx="8" cy="9" r="6" stroke="#7030a8" stroke-width="1.5"/><path d="M3 18l15 4" stroke="#7030a8"/><g class="dots"><circle cx="8" cy="9" r="1"/><circle cx="3" cy="18" r="1.5"/><circle cx="18" cy="22" r="1.5"/></g><g stroke="#a89810" stroke-width="2"><ellipse cx="19" cy="5" rx="2.5" ry="4"/><ellipse cx="20" cy="11" rx="2.5" ry="4"/></g></svg></button>
      <button class="tb" aria-label="基本曲线"><svg><circle cx="8" cy="9" r="7"/><circle cx="8" cy="9" r=".5"/><path d="M9 22L21 10"/><g class="dots"><circle cx="9" cy="22" r="1.5"/><circle cx="21" cy="10" r="1.5"/></g></svg></button>
      <button class="tb hot" aria-label="艺术样条"><svg><path d="M2 14L8 3l8 19 6-12" stroke="#999"/><path d="M2 14q7-6 13 1 4 1 7-5"/><g class="nodes"><circle cx="2" cy="14" r="1.5"/><circle cx="8" cy="3" r="1.5"/><circle cx="16" cy="22" r="1.5"/><circle cx="22" cy="10" r="1.5"/></g><g class="dots"><circle cx="7" cy="11" r="1.5"/><circle cx="16" cy="15" r="1.5"/></g></svg></button>
      <button class="tb" aria-label="拟合样条"><svg><path d="M3 3q1 8 10 8 7 1 9 11"/><g class="nodes"><circle cx="5" cy="3" r="1.5"/><circle cx="3" cy="10" r="1.5"/><circle cx="15" cy="8" r="1.5"/><circle cx="13" cy="15" r="1.5"/><circle cx="22" cy="20" r="1.5"/></g></svg></button>
      <button class="tb" aria-label="文本"><svg><text x="3" y="21" class="glyph-l">A</text></svg></button>
      <i class="sep"></i>
      <button class="tb" aria-label="偏置曲线"><svg><path d="M2 9l8-7h7q8 8 5 15l-5 5H2z" stroke="#555"/><path d="M6 10l5-5q5 0 5 4 6 1 5 6t-6 4H6z" stroke="#d83040" stroke-width="1.5"/></svg></button>
      <button class="tb" aria-label="桥接曲线"><svg><path d="M5 2q-7 6 0 6 4 0 7-3 4-3 10-3" stroke-dasharray="6 1"/><path d="M2 14q6-2 4 1-6 7 1 7 4 0 7-3 4-3 9-3"/><path d="M13 8v5" stroke="#e05010" stroke-width="2"/><path d="M10 12h7l-4 5z" fill="#e05010" stroke="none"/></svg></button>
      <button class="tb" aria-label="投影曲线"><svg><path d="M1 20l5-9 17 2-4 9q-9-3-18-2z" fill="url(#blue)" stroke="#2858c0"/><path d="M5 2h15" stroke="#111" stroke-width="2"/><path d="M12 3v5" stroke="#e05010" stroke-width="2"/><path d="M9 7h7l-4 5z" fill="#e05010" stroke="none"/><path d="M5 17q4-3 8 0t6-1" stroke="#d02030" stroke-width="1.5"/></svg></button>
      <button class="tb" aria-label="镜像曲线"><svg><path d="M1 2h6v5h4v11H1z" fill="#fff" stroke="#999"/><path d="M8 6l8-4v17l-8 4z" fill="#ffe040" stroke="#d8a820"/><path d="M16 3h7v18h-7M12 12h7v6h-7z" stroke="#f07060"/></svg></button>
      <button class="tb" aria-label="相交曲线"><svg><path d="M2 2l11 4v17L2 19z" fill="#f8fff8" stroke="#333"/><path d="M13 6l10-3v17l-10 3z" fill="#f8fff8" stroke="#333"/><path d="M5 9l6 1v7l-6-1zM16 11l4-1v6l-4 1" stroke="#d82030" stroke-width="1.5"/><path d="M5 9l3-2 7 1-4 2M15 8l5 2M11 17l5 0" stroke="#2030b8" stroke-width="1.5"/></svg></button>
      <button class="tb" aria-label="抽取曲线"><svg><path d="M1 4c0-3 11-3 11 0v16c0 3-11 3-11 0z" fill="url(#blue)" stroke="#2040a0"/><path d="M12 12h6" stroke="#e07010" stroke-width="2"/><path d="M16 8l5 4-5 4z" fill="#e07010" stroke="none"/><path d="M18 3q9 9 0 18" stroke="#e02020" stroke-width="1.5"/></svg></button>
    </div>
    <div class="palette-foot"></div>
  </section>

  <div class="tooltip" role="tooltip">
    <svg class="tail"><path d="M1 19V1l18 18" fill="#ffffe1" stroke="#000"/></svg>
    <h3>艺术样条</h3>
    <p>通过拖放定义点或极点并在定义点指派斜率或曲率约束，来创建和编辑样条。</p>
  </div>
</div>
</body>
</html>
```
FILE: styles.css
```
* {
  box-sizing: border-box;
}
body {
  margin: 0;
  font-family: "Noto Sans CJK SC", "Liberation Sans", sans-serif;
  font-size: 12px;
  line-height: 16px;
  color: #000;
  background: #d4d4d4;
}
h1, h2, h3, p, ul {
  margin: 0;
  padding: 0;
}
button {
  margin: 0;
  padding: 0;
  border: none;
  background: none;
  font: inherit;
  color: inherit;
  flex: none;
}
svg {
  display: block;
  flex: none;
  fill: none;
}
i {
  font-style: normal;
  flex: none;
}
.defs {
  position: absolute;
}
.la {
  font-family: "Liberation Mono", monospace;
  font-size: 10px;
  line-height: 1;
  white-space: pre;
}
.app {
  position: relative;
  display: flex;
  flex-direction: column;
  height: 100vh;
  overflow: hidden;
}

/* title bar */
.titlebar {
  flex: none;
  display: flex;
  align-items: center;
  height: 26px;
  padding: 0 0 0 3px;
  border-top: 1px solid #000;
  border-radius: 6px 6px 0 0;
  background: linear-gradient(#6a6a6e 0, #4a4a4e 7px, #2c2c2e 8px, #1c1c1c 10px, #1c1c1c 100%);
}
.app-icon {
  width: 16px;
  height: 16px;
}
.titlebar h1 {
  flex: 1;
  padding-left: 5px;
  font-size: 14px;
  line-height: 20px;
  color: #7d7d7d;
  white-space: nowrap;
}
.titlebar .la {
  font-size: 13px;
}
.brand {
  margin-right: 27px;
  font: bold 14px "Liberation Sans", sans-serif;
  color: #fff;
}
.win-buttons {
  display: flex;
  gap: 3px;
  padding-right: 1px;
  align-self: flex-start;
}
.win-buttons button {
  width: 21px;
  height: 21px;
  border-radius: 3px;
  border: 1px solid #1a1a1a;
  background: linear-gradient(#666, #3a3a3a 45%, #2a2a2a);
}
.win-buttons svg {
  width: 18px;
  height: 18px;
  stroke: #fff;
}

/* menu */
.menubar {
  flex: none;
  display: flex;
  align-items: center;
  gap: 13px;
  height: 24px;
  background: #e4e4e4;
  border-bottom: 1px solid #bdbdbd;
}
.menubar .grip {
  height: 16px;
  margin-right: -14px;
}
.menubar > button {
  white-space: nowrap;
}
.menu-icon {
  width: 20px;
  height: 18px;
  margin-right: -10px;
}
.mdi-buttons {
  display: flex;
  gap: 3px;
  margin-left: auto;
  padding-right: 5px;
}
.mdi-buttons button {
  width: 16px;
  height: 17px;
  border: 1px solid #777;
  border-radius: 3px;
  background: #f0f0f0;
}
.mdi-buttons svg {
  width: 14px;
  height: 14px;
  stroke: #555;
}
.mdi-buttons button:disabled {
  opacity: .4;
}

/* toolbars */
.toolrow {
  flex: none;
  display: flex;
  height: 34px;
  background: #cfcfcf;
  border-bottom: 1px solid #c2c2c2;
}
.bottom-row {
  height: 35px;
  border-bottom: 2px solid #9b9b9b;
}
.bar {
  flex: none;
  display: flex;
  align-items: center;
  background: linear-gradient(#e2e2e2, #cfcfcf);
  border-top: 1px solid #f4f4f4;
  border-right: 1px solid #f4f4f4;
  box-shadow: inset -1px 0 #b0b0b0;
}
.std { width: 387px; }
.view { width: 392px; }
.drafting { width: 350px; }
.dims { width: 201px; }
.notes { width: 202px; }
.center { width: 113px; }
.apps { width: 116px; }
.small { width: 52px; }
.analysis { width: 239px; }
.last { flex: 1; border-right: none; }
.grip {
  width: 8px;
  height: 24px;
  background: repeating-linear-gradient(#999 0 2px, transparent 2px 4px) 4px 1px / 2px 22px no-repeat;
}
.tb {
  width: 31px;
  height: 30px;
  display: flex;
  align-items: center;
  justify-content: center;
}
.tb svg {
  width: 24px;
  height: 24px;
  stroke: #777;
}
.tb.on {
  background: #fff;
  border: 1px solid #555;
  border-radius: 3px;
}
.tb.hot {
  background: #efefef;
  border: 1px solid #a8a8a8;
}
.off svg, .drafting .tb svg, .analysis .tb svg {
  opacity: .75;
}
.sep {
  width: 6px;
  height: 28px;
  border-right: 1px solid #fff;
  box-shadow: inset -1px 0 #b5b5b5;
}
.arrow {
  width: 0;
  height: 0;
  border: 3px solid transparent;
  border-top-color: #000;
  border-bottom: none;
}
.dd {
  width: 12px;
  height: 30px;
  display: flex;
  align-items: center;
  justify-content: center;
}
.start {
  display: flex;
  align-items: center;
  gap: 3px;
  width: 66px;
  padding-left: 3px;
}
.start svg {
  width: 24px;
  height: 24px;
}
.more {
  display: flex;
  flex-direction: column;
  align-items: center;
  justify-content: flex-end;
  gap: 9px;
  width: 16px;
  height: 32px;
  margin-left: auto;
  padding-bottom: 5px;
  font: bold 15px/14px "Liberation Sans", sans-serif;
}
.small .more {
  width: 12px;
}
.glyph { font: bold 19px "Liberation Serif", serif; fill: #111; stroke: none; }
.glyph-l { font: bold 25px "Liberation Serif", serif; fill: #111; stroke: none; }
.glyph-s { font: bold 14px "Liberation Sans", sans-serif; fill: #202060; stroke: none; }
.glyph-i { font: italic bold 21px "Liberation Serif", serif; fill: #1a30c0; stroke: none; }
.tag { font: 11px "Liberation Sans", sans-serif; fill: #40407e; stroke: none; }
.tag.red { fill: #9a3c3c; }
.info { font: bold 17px "Liberation Serif", serif; fill: #fff; stroke: none; }

/* selection bar */
.selbar {
  flex: none;
  display: flex;
  align-items: center;
  height: 27px;
  padding: 0 6px;
  background: linear-gradient(#cdcdcd, #dedede);
  border-bottom: 1px solid #aaa;
}
.selbar .sep {
  width: 3px;
  height: 24px;
}
.combo {
  position: relative;
  flex: none;
  width: 108px;
  height: 16px;
}
.combo.wide {
  width: 114px;
  margin-left: 11px;
}
.combo select {
  appearance: none;
  display: block;
  width: 100%;
  height: 16px;
  padding: 0 2px;
  border: 1px solid #555;
  border-radius: 3px;
  background: #fff;
  font: 12px/14px "Noto Sans CJK SC", sans-serif;
  color: #000;
}
.combo::after {
  content: "";
  position: absolute;
  right: 1px;
  top: 1px;
  width: 15px;
  height: 14px;
  border: 2px solid #1d4392;
  background: #c6d6f4;
}
.selmid {
  flex: none;
  display: flex;
  align-items: center;
  width: 200px;
  padding-left: 8px;
}
.sb {
  display: flex;
  align-items: center;
  justify-content: center;
  width: 23px;
  height: 22px;
  border: 1px solid transparent;
}
.sb.on {
  background: #fff;
  border-color: #666;
  border-radius: 3px;
}
.sb.solid {
  margin-left: 3px;
}
.sb svg {
  width: 18px;
  height: 18px;
}
.selbar .end {
  margin: 10px 0 0 auto;
}

/* cue and status line */
.cuebar {
  flex: none;
  display: flex;
  height: 22px;
  background: #dadada;
  border-top: 1px solid #f6f6f6;
  border-bottom: 1px solid #888;
}
.cue {
  width: 473px;
  border-right: 1px solid #f6f6f6;
}
.status {
  flex: 1;
  padding-left: 3px;
  font-size: 13px;
  font-weight: bold;
  line-height: 17px;
  white-space: nowrap;
}
.status .la {
  font-size: 12px;
}
.cell {
  width: 20px;
  border-left: 1px solid #b0b0b0;
  box-shadow: inset 1px 0 #f6f6f6;
}
.cell.big {
  width: 36px;
}
.full {
  width: 22px;
  padding: 0 0 0 3px;
  border-left: 1px solid #b0b0b0;
}
.full svg {
  width: 16px;
  height: 16px;
}
.groove {
  flex: none;
  height: 16px;
  padding: 5px;
  background: #c6c6c6;
  border-bottom: 1px solid #777;
}
.groove::before {
  content: "";
  display: block;
  height: 5px;
  border: 1px solid #999;
  border-bottom-color: #f4f4f4;
  border-radius: 2px;
  background: #d8d8d8;
}

/* drawing area */
.workspace {
  flex: 1;
  display: flex;
  min-height: 0;
}
.viewport {
  flex: 1;
  min-width: 0;
  border-left: 2px solid #8d8d80;
  border-right: 2px solid #f2f2ee;
  background: #e4e4e4;
}
.scene {
  width: 100%;
  height: 100%;
}
.part {
  stroke: #66652f;
  stroke-width: 5;
  stroke-linejoin: round;
}
.thick {
  stroke-width: 8;
}
.axis {
  font: 9px Roboto, sans-serif;
  fill: #e8590c;
}
.axis.x { fill: #f22; }
.axis.z { fill: #22f; }
.workview {
  font: 600 13px "Open Sans", "Noto Sans", sans-serif;
  fill: #ff6600;
}

/* part navigator */
.navigator {
  flex: none;
  display: flex;
  flex-direction: column;
  width: 180px;
  padding: 7px 9px 5px 8px;
  background: #ebebeb;
  border-right: 1px solid #fff;
}
.nav-title {
  flex: none;
  display: flex;
  align-items: center;
  justify-content: space-between;
  height: 26px;
  padding: 0 3px 4px 4px;
}
.nav-title h2 {
  font-size: 13px;
  line-height: 18px;
}
.nav-title svg {
  width: 13px;
  height: 14px;
}
.tree {
  flex: 1;
  min-height: 0;
  display: flex;
  flex-direction: column;
  border: 1px solid #555;
  background: #fff;
}
.tree-head {
  flex: none;
  display: flex;
  align-items: center;
  gap: 16px;
  height: 17px;
  padding-left: 6px;
  background: linear-gradient(#f4f4f4, #d6d6d6);
  border-bottom: 1px solid #ccc;
}
.tree-head i {
  border: 5px solid transparent;
  border-top: none;
  border-bottom-color: #111;
}
.tree-body {
  flex: 1;
  min-height: 0;
  display: flex;
}
.tree ul {
  flex: 1;
  min-width: 0;
  overflow: hidden;
  list-style: none;
}
.tree li {
  display: flex;
  align-items: center;
  height: 20px;
  white-space: nowrap;
  border-bottom: 1px solid #e4e4e4;
}
.tree li:nth-child(even) {
  background: #f5f5f5;
}
.tree li svg {
  width: 16px;
  height: 16px;
  margin-right: 3px;
}
.tree .dim {
  color: #999;
}
.tree .dim svg {
  opacity: .8;
}
.g {
  position: relative;
  align-self: stretch;
  display: flex;
  align-items: center;
  justify-content: center;
  width: 19px;
}
.g::before {
  content: "";
  position: absolute;
  left: 8px;
  top: 0;
  bottom: -1px;
}
.g.v::before, .g.t::before { border-left: 1px dotted #999; }
.g.l::before { border-left: 1px dotted #999; bottom: 10px; }
.g.ell::before { border-left: 1px dotted #999; top: 10px; }
.g.t::after, .g.l::after, .g.ell::after {
  content: "";
  position: absolute;
  left: 9px;
  right: 0;
  top: 10px;
  border-top: 1px dotted #999;
}
.g button {
  position: relative;
  z-index: 1;
  width: 9px;
  height: 9px;
  border: 1px solid #888;
  border-radius: 1px;
  background: #fff;
  font: 9px/7px "Liberation Mono", monospace;
}
.ic {
  width: 20px;
}
.ic.ck {
  width: 18px;
  padding-left: 2px;
}
.tree .ck svg {
  width: 14px;
  height: 14px;
}
.tree input {
  appearance: none;
  flex: none;
  width: 12px;
  height: 12px;
  margin: 0 2px 0 3px;
  border: 1px solid #222;
  background: #fff;
}
.tree input::before {
  content: "";
  display: block;
  width: 4px;
  height: 7px;
  margin: 0 0 0 3px;
  border: solid #10b010;
  border-width: 0 2px 2px 0;
  transform: rotate(40deg);
}
.vscroll {
  display: flex;
  flex-direction: column;
  width: 17px;
  background: #f3f2ec;
}
.vscroll button, .hscroll button, .thumb {
  flex: none;
  width: 16px;
  height: 16px;
  border: 1px solid #9cb6ee;
  border-radius: 2px;
  background: linear-gradient(90deg, #d6e2ff, #b9ccfa);
}
.vscroll svg, .hscroll svg {
  width: 16px;
  height: 16px;
  margin: -1px;
  stroke: #4d6185;
  stroke-width: 2;
}
.thumb {
  display: flex;
  align-items: center;
  justify-content: center;
}
.vscroll .thumb {
  height: 34px;
  margin-top: 1px;
}
.vscroll .down {
  margin-top: auto;
}
.hscroll {
  flex: none;
  display: flex;
  height: 16px;
  padding-right: 18px;
  background: #f3f2ec;
}
.hscroll .thumb {
  width: 50px;
  margin-left: 1px;
}
.hscroll .right {
  margin-left: auto;
}
.splitter {
  flex: none;
  display: flex;
  align-items: center;
  gap: 12px;
  height: 12px;
}
.splitter::before, .splitter::after {
  content: "";
  flex: 1;
  border-top: 1px solid #bbb;
}
.splitter i {
  width: 28px;
  height: 6px;
  border: 1px solid #aaa;
  background: #ccc;
}
.fold {
  display: flex;
  align-items: center;
  height: 23px;
  border-bottom: 1px solid #999;
  border-right: 1px solid #999;
  background: linear-gradient(#f4f4f4, #d9dadc);
}
.fold span {
  flex: 1;
  padding-left: 6px;
  font-size: 13px;
  font-weight: bold;
  text-align: left;
}
.fold svg {
  width: 22px;
  height: 22px;
  border-left: 1px solid #aaa;
  stroke: #555;
  stroke-width: 2;
}

/* resource tabs */
.tabs {
  flex: none;
  display: flex;
  flex-direction: column;
  gap: 2px;
  width: 33px;
  padding-top: 15px;
  background: #a8a8a8;
}
.tabs button {
  width: 27px;
  height: 40px;
  padding: 0 0 0 1px;
  border: 1px solid #777;
  border-left: none;
  border-radius: 0 4px 4px 0;
  background: linear-gradient(90deg, #d8d8d8, #c2c2c2);
}
.tabs .active {
  width: 29px;
  background: #ebebeb;
}
.tabs .gap {
  margin-top: 12px;
}
.tabs svg {
  width: 24px;
  height: 24px;
}

/* sketch toolbar */
.sketchbar {
  flex: none;
  display: flex;
  align-items: center;
  height: 35px;
  border-top: 1px solid #fff;
  background: linear-gradient(#e4e4e4, #cacaca);
}
.sketchbar .tb svg {
  stroke: #8a8a8a;
}
.sketchbar .more {
  margin-left: 0;
}
.sheet {
  position: relative;
  flex: none;
  width: 82px;
  height: 17px;
  margin: 0 4px 0 3px;
}
.sheet select {
  appearance: none;
  display: block;
  width: 100%;
  height: 17px;
  padding: 0 1px;
  border: 1px solid #999;
  border-radius: 2px;
  background: #cfcfcf;
  font: 10px "Liberation Mono", monospace;
  color: #8a8a8a;
  opacity: 1;
}
.sheet::before {
  content: "";
  position: absolute;
  right: 1px;
  top: 1px;
  width: 17px;
  height: 15px;
  background: #f2f2f2;
}
.sheet::after {
  content: "";
  position: absolute;
  right: 4px;
  top: 6px;
  border: 5px solid transparent;
  border-top: 6px solid #888;
  border-bottom: none;
}
.sketchbar .dots {
  fill: #a87070;
  stroke: #a87070;
}
.nodes {
  fill: #777;
  stroke: #777;
}

/* view pager lying over the groove */
.pager {
  position: absolute;
  left: 705px;
  top: 202px;
  display: flex;
  border: 1px solid #666;
}
.pager button {
  width: 19px;
  height: 18px;
  background: linear-gradient(#fafafa, #d4d4d4);
}
.pager svg {
  width: 18px;
  height: 18px;
  stroke: #666;
  stroke-width: 2;
}
.pager-mid {
  width: 64px;
  background: linear-gradient(#555, #1b1b1b 40%);
}

/* floating curve palette */
.palette {
  position: absolute;
  left: 55px;
  top: 164px;
}
.palette-head {
  display: flex;
  align-items: center;
  height: 22px;
  padding-left: 8px;
  border: 1px solid #000;
  border-radius: 5px 5px 0 0;
  background: linear-gradient(#5a5a5a, #3a3a3a 30%, #1c1c1c 45%);
}
.palette-head h2 {
  flex: 1;
  font-size: 13px;
  line-height: 18px;
  color: #fff;
}
.palette-head .arrow {
  border-width: 4px 4px 0;
  border-top-color: #fff;
  margin-right: 6px;
}
.palette-head button {
  border-left: 1px solid #888;
}
.palette-head svg {
  width: 18px;
  height: 17px;
  margin-left: 2px;
  stroke: #fff;
  stroke-width: 3;
}
.palette-body {
  display: flex;
  align-items: center;
  height: 34px;
  padding: 0 4px;
  background: #e0e0e0;
}
.palette .tb svg {
  stroke: #222;
}
.palette .dots {
  fill: #e01010;
  stroke: #e01010;
}
.palette-foot {
  height: 9px;
  border-radius: 0 0 5px 5px;
  background: linear-gradient(#444, #1a1a1a 3px);
}

.tooltip {
  position: absolute;
  left: 183px;
  top: 245px;
  width: 313px;
  padding: 4px 0 4px 6px;
  border: 1px solid #000;
  border-radius: 7px;
  background: #ffffe1;
  box-shadow: 3px 3px 3px rgba(0,0,0,.35);
}
.tooltip .tail {
  position: absolute;
  left: 14px;
  top: -19px;
  width: 20px;
  height: 20px;
}
.tooltip h3 {
  font-size: 13px;
  line-height: 16px;
}
.tooltip p {
  padding-top: 3px;
  line-height: 13px;
}
```
